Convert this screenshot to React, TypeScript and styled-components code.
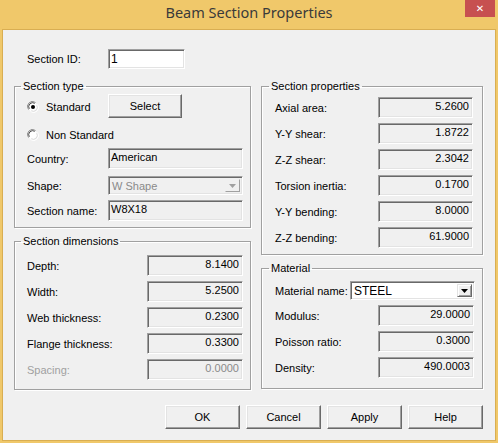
import styled, { createGlobalStyle } from "styled-components";

const GlobalStyle = createGlobalStyle`
  html, body { margin: 0; padding: 0; background: #f0c86a; }
  body { font-family: "Liberation Sans", Arial, sans-serif; font-size: 11px; color: #000; }
  * { box-sizing: border-box; }
`;

interface IFieldRow {
    label: string,
    value: string,
    disabled?: boolean
}

const dimensions: IFieldRow[] = [
    { label: 'Depth:', value: '8.1400' },
    { label: 'Width:', value: '5.2500' },
    { label: 'Web thickness:', value: '0.2300' },
    { label: 'Flange thickness:', value: '0.3300' },
    { label: 'Spacing:', value: '0.0000', disabled: true },
];

const properties: IFieldRow[] = [
    { label: 'Axial area:', value: '5.2600' },
    { label: 'Y-Y shear:', value: '1.8722' },
    { label: 'Z-Z shear:', value: '2.3042' },
    { label: 'Torsion inertia:', value: '0.1700' },
    { label: 'Y-Y bending:', value: '8.0000' },
    { label: 'Z-Z bending:', value: '61.9000' },
];

const material: IFieldRow[] = [
    { label: 'Modulus:', value: '29.0000' },
    { label: 'Poisson ratio:', value: '0.3000' },
    { label: 'Density:', value: '490.0003' },
];

const Radio = ({ checked }: { checked: boolean }) => (
    <RadioIcon width="12" height="12" viewBox="0 0 12 12">
        <path d="M1.5 8.5 A5 5 0 0 1 8.5 1.5" stroke="#8a8a8a" fill="none" />
        <path d="M10.5 3.5 A5 5 0 0 1 3.5 10.5" stroke="#ffffff" fill="none" />
        <circle cx="6" cy="6" r="4.5" fill="#ffffff" stroke="none" />
        <path d="M2.3 7.8 A4 4 0 0 1 7.8 2.3" stroke="#4a4a4a" fill="none" />
        <path d="M9.7 4.2 A4 4 0 0 1 4.2 9.7" stroke="#dcdcdc" fill="none" />
        {checked && <circle cx="6" cy="6" r="2" fill="#000" />}
    </RadioIcon>
);

const Arrow = ({ color }: { color: string }) => (
    <svg width="7" height="4" viewBox="0 0 7 4">
        <path d="M0 0 H7 L3.5 4 Z" fill={color} />
    </svg>
);

const App = () => {
    return <Window>
        <GlobalStyle />
        <TitleBar>
            <span />
            <Title>Beam Section Properties</Title>
            <CloseButton>✕</CloseButton>
        </TitleBar>
        <Body>
            <IdRow>
                <Label $w={81}>Section ID:</Label>
                <TextInput>1</TextInput>
            </IdRow>
            <Columns>
                <Column>
                    <Group $pad="0 7px 6px 12px">
                        <Legend>Section type</Legend>
                        <Row $h={24} $mt={1}>
                            <RadioLabel><Radio checked />Standard</RadioLabel>
                            <Button $w={74}>Select</Button>
                        </Row>
                        <Row $h={20} $mt={6}>
                            <RadioLabel><Radio checked={false} />Non Standard</RadioLabel>
                        </Row>
                        <Row $h={21} $mt={4}>
                            <Label $w={81}>Country:</Label>
                            <Field $w={136} $align="left">American</Field>
                        </Row>
                        <Row $h={19} $mt={7}>
                            <Label $w={81}>Shape:</Label>
                            <Combo $w={136} $disabled>
                                <ComboText $disabled>W Shape</ComboText>
                                <ComboButton $disabled><Arrow color="#a0a0a0" /></ComboButton>
                            </Combo>
                        </Row>
                        <Row $h={21} $mt={5}>
                            <Label $w={81}>Section name:</Label>
                            <Field $w={136} $align="left">W8X18</Field>
                        </Row>
                    </Group>
                    <Group $pad="0 7px 9px 12px">
                        <Legend>Section dimensions</Legend>
                        <FieldList $mt={7}>
                            {dimensions.map(row => (
                                <Row key={row.label} $h={21}>
                                    <Label $w={120} $disabled={row.disabled}>{row.label}</Label>
                                    <Field $w={97} $align="right" $disabled={row.disabled}>{row.value}</Field>
                                </Row>
                            ))}
                        </FieldList>
                    </Group>
                </Column>
                <Column>
                    <Group $pad="0 9px 6px 13px">
                        <Legend>Section properties</Legend>
                        <FieldList $mt={4}>
                            {properties.map(row => (
                                <Row key={row.label} $h={21}>
                                    <Label $w={103}>{row.label}</Label>
                                    <Field $w={96} $align="right">{row.value}</Field>
                                </Row>
                            ))}
                        </FieldList>
                    </Group>
                    <Group $pad="0 7px 10px 13px">
                        <Legend>Material</Legend>
                        <Row $h={19} $mt={6}>
                            <Label $w={75}>Material name:</Label>
                            <Combo $w={126}>
                                <ComboText>STEEL</ComboText>
                                <ComboButton><Arrow color="#000" /></ComboButton>
                            </Combo>
                        </Row>
                        <FieldList $mt={5}>
                            {material.map(row => (
                                <Row key={row.label} $h={21}>
                                    <Label $w={103}>{row.label}</Label>
                                    <Field $w={96} $align="right">{row.value}</Field>
                                </Row>
                            ))}
                        </FieldList>
                    </Group>
                </Column>
            </Columns>
            <ButtonBar>
                {['OK', 'Cancel', 'Apply', 'Help'].map(text => (
                    <Button key={text} $w={75} $h={24}>{text}</Button>
                ))}
            </ButtonBar>
        </Body>
    </Window>
};

export default App;

const Window = styled.div({
    width: '498px',
    height: '443px',
    background: '#f0c86a',
    display: 'flex',
    flexDirection: 'column',
});

const TitleBar = styled.div({
    height: '29px',
    display: 'grid',
    gridTemplateColumns: '1fr auto 1fr',
    alignItems: 'start',
});

const Title = styled.div({
    fontFamily: '"Noto Sans", "Open Sans", sans-serif',
    fontSize: '14.5px',
    color: '#3a3a3a',
    paddingTop: '2px',
    lineHeight: '20px',
});

const CloseButton = styled.div({
    justifySelf: 'end',
    marginRight: '3px',
    width: '30px',
    height: '17px',
    background: '#c75050',
    color: '#fff',
    fontFamily: '"DejaVu Sans", sans-serif',
    fontWeight: 'bold',
    fontSize: '10px',
    display: 'flex',
    alignItems: 'center',
    justifyContent: 'center',
});

const Body = styled.div({
    flex: 1,
    margin: '0 2px 2px 2px',
    border: '1px solid #d9ae52',
    background: '#f0f0f0',
    padding: '19px 12px 0 11px',
    display: 'flex',
    flexDirection: 'column',
});

const IdRow = styled.div({
    display: 'flex',
    alignItems: 'center',
    height: '20px',
    paddingLeft: '13px',
});

const Columns = styled.div({
    marginTop: '11px',
    display: 'grid',
    gridTemplateColumns: '237px 222px',
    columnGap: '10px',
});

const Column = styled.div({
    display: 'flex',
    flexDirection: 'column',
    gap: '7px',
});

const Group = styled.fieldset<{$pad: string}>(props => ({
    margin: 0,
    padding: props.$pad,
    border: '1px solid #a0a0a0',
    boxShadow: 'inset 1px 1px 0 #fff, 1px 1px 0 #fff',
    display: 'flex',
    flexDirection: 'column',
    minWidth: 0,
}));

const Legend = styled.legend({
    marginLeft: '-6px',
    padding: '0 2px',
    lineHeight: '13px',
    height: '13px',
});

const FieldList = styled.div<{$mt: number}>(props => ({
    marginTop: `${props.$mt}px`,
    display: 'flex',
    flexDirection: 'column',
    gap: '5px',
}));

const Row = styled.div<{$h: number, $mt?: number}>(props => ({
    display: 'flex',
    alignItems: 'center',
    height: `${props.$h}px`,
    marginTop: `${props.$mt ?? 0}px`,
}));

const Label = styled.span<{$w: number, $disabled?: boolean}>(props => ({
    width: `${props.$w}px`,
    flexShrink: 0,
    whiteSpace: 'nowrap',
    color: props.$disabled ? '#a0a0a0' : '#000',
}));

const RadioLabel = styled.label({
    display: 'flex',
    alignItems: 'center',
    gap: '7px',
    minWidth: '81px',
    paddingTop: '2px',
    whiteSpace: 'nowrap',
});

const RadioIcon = styled.svg({
    flexShrink: 0,
});

const sunken = {
    borderStyle: 'solid',
    borderWidth: '1px',
    borderColor: '#a0a0a0 #fff #fff #a0a0a0',
    boxShadow: 'inset 1px 1px 0 #696969, inset -1px -1px 0 #e3e3e3',
};

const Field = styled.div<{$w: number, $align: 'left' | 'right', $disabled?: boolean}>(props => ({
    ...sunken,
    width: `${props.$w}px`,
    height: '100%',
    background: '#f0f0f0',
    color: props.$disabled ? '#8a8a8a' : '#000',
    textAlign: props.$align,
    padding: '2px 3px 0 2px',
    lineHeight: '13px',
    whiteSpace: 'nowrap',
}));

const TextInput = styled.div({
    ...sunken,
    width: '77px',
    height: '20px',
    background: '#fff',
    padding: '2px 2px 0',
    fontSize: '12px',
    lineHeight: '14px',
});

const Combo = styled.div<{$w: number, $disabled?: boolean}>(props => ({
    ...sunken,
    width: `${props.$w}px`,
    height: '100%',
    background: props.$disabled ? '#f0f0f0' : '#fff',
    display: 'flex',
    alignItems: 'stretch',
    padding: '2px',
}));

const ComboText = styled.span<{$disabled?: boolean}>(props => ({
    flex: 1,
    paddingLeft: '1px',
    lineHeight: '14px',
    color: props.$disabled ? '#8a8a8a' : '#000',
    fontSize: props.$disabled ? '11px' : '12px',
}));

const ComboButton = styled.span<{$disabled?: boolean}>(props => ({
    width: '15px',
    display: 'flex',
    alignItems: 'center',
    justifyContent: 'center',
    background: '#f0f0f0',
    borderStyle: 'solid',
    borderWidth: '1px',
    borderColor: props.$disabled ? '#f0f0f0 #a0a0a0 #a0a0a0 #f0f0f0' : '#e3e3e3 #696969 #696969 #e3e3e3',
    boxShadow: props.$disabled ? 'none' : 'inset 1px 1px 0 #fff, inset -1px -1px 0 #a0a0a0',
}));

const Button = styled.div<{$w: number, $h?: number}>(props => ({
    width: `${props.$w}px`,
    height: `${props.$h ?? 24}px`,
    background: '#f0f0f0',
    borderStyle: 'solid',
    borderWidth: '1px',
    borderColor: '#fff #696969 #696969 #fff',
    boxShadow: 'inset -1px -1px 0 #a0a0a0, inset 1px 1px 0 #e3e3e3',
    display: 'flex',
    alignItems: 'center',
    justifyContent: 'center',
    flexShrink: 0,
}));

const ButtonBar = styled.div({
    marginTop: '15px',
    display: 'flex',
    justifyContent: 'flex-end',
    gap: '6px',
});
